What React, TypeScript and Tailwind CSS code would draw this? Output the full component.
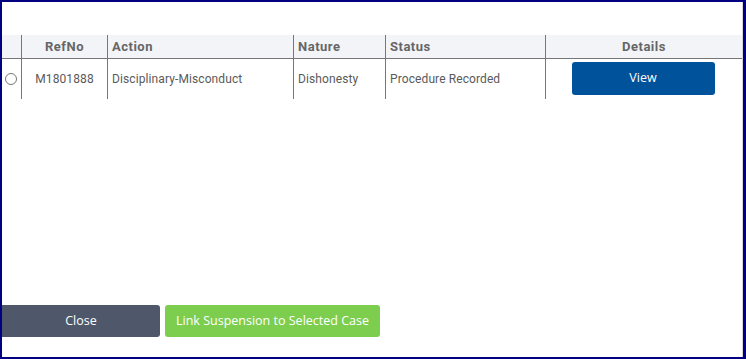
const columns = [
  { label: "", width: "w-[20px]", align: "justify-center" },
  { label: "RefNo", width: "w-[86px]", align: "justify-center" },
  { label: "Action", width: "w-[186px]", align: "justify-start pl-1" },
  { label: "Nature", width: "w-[92px]", align: "justify-start pl-1" },
  { label: "Status", width: "w-[160px]", align: "justify-start pl-1" },
  { label: "Details", width: "flex-1", align: "justify-center" },
];

const row = {
  refNo: "M1801888",
  action: "Disciplinary-Misconduct",
  nature: "Dishonesty",
  status: "Procedure Recorded",
};

export default function App() {
  return (
    <div className="w-[746px] h-[359px] bg-white border-t-2 border-l-2 border-b-2 border-r-[3px] border-[#000080] overflow-hidden">
      <div className="h-full flex flex-col border-r border-[#d4d4dc] font-['Roboto',sans-serif] text-[12px]">
        <div className="h-[33px]" />

        {/* table */}
        <div className="flex flex-col">
          <div className="flex h-[24px] bg-[#f3f4f8] border-b border-[#777]">
            {columns.map((col, i) => (
              <div
                key={i}
                className={`${col.width} ${col.align} flex items-center font-bold text-[13px] tracking-[0.5px] text-[#666] ${
                  i < columns.length - 1 ? "border-r border-[#777]" : ""
                }`}
              >
                {col.label}
              </div>
            ))}
          </div>
          <div className="flex h-[40px] text-[#5a5a5a] tracking-[0.1px]">
            <div className="w-[20px] flex items-center pl-[3px] border-r border-[#777]">
              <span className="w-[12px] h-[12px] rounded-full border border-[#777] bg-white" />
            </div>
            <div className="w-[86px] flex items-center justify-center border-r border-[#777]">
              {row.refNo}
            </div>
            <div className="w-[186px] flex items-center pl-1 border-r border-[#777]">
              {row.action}
            </div>
            <div className="w-[92px] flex items-center pl-1 border-r border-[#777]">
              {row.nature}
            </div>
            <div className="w-[160px] flex items-center pl-1 border-r border-[#777]">
              {row.status}
            </div>
            <div className="flex-1 flex items-center justify-center pr-[2px] pb-[2px]">
              <button className="w-[143px] h-[33px] rounded-[3px] bg-[#00529b] text-white font-['Open_Sans',sans-serif] text-[12.5px]">
                View
              </button>
            </div>
          </div>
        </div>

        <div className="flex-1" />

        {/* footer buttons */}
        <div className="flex gap-[5px] mb-[20px]">
          <button className="-ml-[10px] w-[168px] h-[32px] rounded-[3px] bg-[#4e586a] text-white font-['Open_Sans',sans-serif] text-[12.5px] pl-[10px]">
            Close
          </button>
          <button className="w-[215px] h-[32px] rounded-[3px] bg-[#7dcd4f] text-white font-['Open_Sans',sans-serif] text-[12.5px]">
            Link Suspension to Selected Case
          </button>
        </div>
      </div>
    </div>
  );
}
